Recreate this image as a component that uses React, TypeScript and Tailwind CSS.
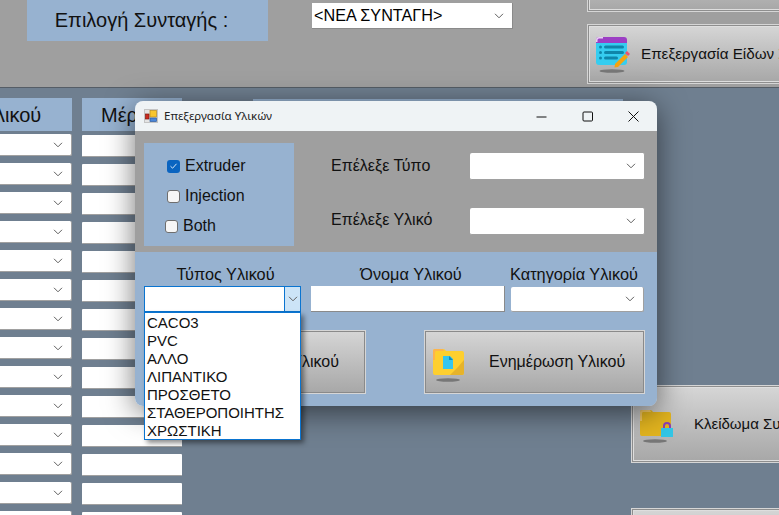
const font = { fontFamily: '"Liberation Sans", Arial, sans-serif' };

function Chevron() {
  return (
    <svg width="10" height="6" viewBox="0 0 10 6" fill="none" stroke="#606060" strokeWidth="1">
      <path d="M1 0.8 L5 4.8 L9 0.8" />
    </svg>
  );
}

function Combo({ className }: { className: string }) {
  return (
    <div className={`flex items-center justify-end bg-white border-b border-r border-[#a0a0a0] rounded-[2px] pr-[8px] shrink-0 ${className}`}>
      <Chevron />
    </div>
  );
}

function Check({ checked, label, className }: { checked?: boolean; label: string; className: string }) {
  return (
    <div className={`flex items-center gap-[5px] h-[20px] text-[16px] text-[#111] ${className}`}>
      {checked ? (
        <span className="w-[13px] h-[13px] rounded-[3px] bg-[#0a64c0] flex items-center justify-center">
          <svg width="9" height="8" viewBox="0 0 9 8" fill="none" stroke="#d8e8f8" strokeWidth="1">
            <path d="M1.5 4.2 L3.6 6.2 L7.5 1.8" />
          </svg>
        </span>
      ) : (
        <span className="w-[13px] h-[13px] rounded-[3px] bg-[#f6f6f6] border border-[#6e6e6e]" />
      )}
      <span>{label}</span>
    </div>
  );
}

function Shadow() {
  return <ellipse cx="16" cy="32" rx="12" ry="1.8" fill="#777" />;
}

function FolderDoc() {
  return (
    <svg width="34" height="36" viewBox="0 0 34 36">
      <path d="M1 3 Q1 1 3 1 H11 Q13 1 14 3 H30 Q32 3 32 5 V25 Q32 27 30 27 H3 Q1 27 1 25 Z" fill="#fecf2f" />
      <path d="M1 3 Q1 1 3 1 H11 L12 3 H4 Q3 3 3 5 V12 L1 12 Z" fill="#fdb44c" />
      <path d="M18 27 L26 19 L32 12 V25 Q32 27 30 27 Z" fill="#e6b32a" />
      <path d="M11 8 H18 L21 11 V21 H11 Z" fill="#35c6ee" />
      <path d="M17 8 L21 12 H17 Z" fill="#0f8cc0" />
      <Shadow />
    </svg>
  );
}

function FolderLock() {
  return (
    <svg width="36" height="36" viewBox="0 0 36 36">
      <path d="M1 3 Q1 1 3 1 H11 Q13 1 14 3 H30 Q32 3 32 5 V25 Q32 27 30 27 H3 Q1 27 1 25 Z" fill="#e2b41f" />
      <path d="M1 3 Q1 1 3 1 H11 L12 3 H4 Q3 3 3 5 V12 L1 12 Z" fill="#f2c765" />
      <path d="M25 19 V17 A3 3 0 0 1 31 17 V19" fill="none" stroke="#8b3fb5" strokeWidth="2" />
      <rect x="22" y="19" width="12" height="9" fill="#33c6e6" />
      <Shadow />
    </svg>
  );
}

function ListEdit() {
  return (
    <svg width="36" height="38" viewBox="0 0 36 38">
      <path d="M1 4 Q1 1 4 1 H29 Q32 1 32 4 V8 H1 Z" fill="#9c3fc4" />
      <path d="M1 7 H32 V26 Q32 29 29 29 H4 Q1 29 1 26 Z" fill="#35cdf0" />
      <path d="M1 4 Q1 1 4 1 H8 V2.5 H4 Q2.5 2.5 2.5 4 V6 H1 Z" fill="#e8d0f5" />
      <g fill="#0f86aa">
        <rect x="4" y="9.5" width="3" height="3" rx="1.5" />
        <rect x="4" y="15" width="3" height="3" rx="1.5" />
        <rect x="4" y="20.5" width="3" height="3" rx="1.5" />
        <rect x="9" y="9.5" width="20" height="3" rx="1.5" />
        <rect x="9" y="15" width="20" height="3" rx="1.5" />
        <rect x="9" y="20.5" width="14" height="3" rx="1.5" />
      </g>
      <path d="M20 28 L30 18 L33 21 L23 31 L19.5 31.5 Z" fill="#f5a30f" />
      <path d="M30 17 L32 15 L35 18 L33 20 Z" fill="#f0506e" />
      <ellipse cx="17" cy="35" rx="12.5" ry="1.8" fill="#777" />
    </svg>
  );
}

function AppIcon() {
  return (
    <svg width="14" height="14" viewBox="0 0 14 14">
      <rect x="0.5" y="0.5" width="13" height="13" fill="#e4e4e4" stroke="#c4c4c4" />
      <rect x="6" y="1.5" width="6.5" height="6.5" fill="#f7c62f" stroke="#b88a1a" strokeWidth="0.7" />
      <rect x="1.5" y="5" width="3.5" height="5" fill="#cc2a1e" stroke="#801a10" strokeWidth="0.7" />
      <rect x="6" y="9" width="6.5" height="3.5" fill="#4a86d8" stroke="#2a5aa0" strokeWidth="0.7" />
    </svg>
  );
}

function Button({ className, inner, icon, label, textClass }: { className: string; inner: string; icon?: React.ReactNode; label?: string; textClass?: string }) {
  return (
    <div className={`border border-[#d6d6d6] shrink-0 ${className}`}>
      <div className={`h-full bg-gradient-to-b from-[#d5d5d5] to-[#a8a8a8] flex items-center overflow-hidden whitespace-nowrap text-[#111] ${inner}`}>
        {icon}
        {label ? <span className={textClass}>{label}</span> : null}
      </div>
    </div>
  );
}

export default function App() {
  const rows = Array.from({ length: 14 });
  const mainOuter = "p-[1px] bg-[#8e8e8e]";
  const mainInner = "border border-[#dedede]";
  const dialogInner = "border border-[#8a8a8a]";
  return (
    <div style={font} className="relative w-[779px] h-[515px] overflow-hidden bg-[#6f7f90]">
      {/* Main form, top strip */}
      <div className="h-[88px] bg-[#9f9f9f] border-b border-[#555d66] flex items-start overflow-hidden">
        <div className="ml-[27px] w-[241px] h-[41px] bg-[#97b2d0] flex items-center justify-center pr-[12px] pb-[2px] text-[20px] text-[#111] shrink-0">
          Επιλογή Συνταγής :
        </div>
        <div className="ml-[44px] mt-[3px] w-[201px] h-[26px] bg-white border-b border-r border-[#8a8a8a] flex items-center justify-between pl-[2px] pr-[8px] text-[16.2px] text-black shrink-0">
          <span>&lt;ΝΕΑ ΣΥΝΤΑΓΗ&gt;</span>
          <Chevron />
        </div>
        <div className="ml-[74px] w-[250px] -mt-[48px] flex flex-col gap-[12px] shrink-0">
          <Button className={`h-[60px] ${mainOuter}`} inner={mainInner} />
          <Button
            className={`h-[60px] ${mainOuter}`}
            inner={mainInner}
            icon={<span className="ml-[5px] mt-[2px] flex"><ListEdit /></span>}
            label="Επεξεργασία Είδων Συνταγών"
            textClass="ml-[10px] text-[15.2px]"
          />
        </div>
      </div>

      {/* Main form, body */}
      <div className="flex items-start pt-[10px]">
        <div className="-ml-[100px] w-[172px] flex flex-col shrink-0">
          <div className="h-[33px] bg-[#97b2d0] text-[20px] text-[#111] flex items-center justify-center pr-[10px] mb-[3px]">Τύπος Υλικού</div>
          <div className="flex flex-col gap-[7px]">
            {rows.map((_, i) => (
              <Combo key={i} className="h-[22px] w-full" />
            ))}
          </div>
        </div>
        <div className="ml-[10px] w-[100px] flex flex-col shrink-0">
          <div className="h-[33px] bg-[#97b2d0] text-[20px] text-[#111] flex items-center pl-[19px] mb-[4px]">Μέρη</div>
          <div className="flex flex-col gap-[7px]">
            {rows.map((_, i) => (
              <div key={i} className="h-[22px] bg-white border-b border-[#a0a0a0] rounded-[1px]" />
            ))}
          </div>
        </div>
        <div className="ml-[71px] w-[370px] h-[33px] mt-[1px] bg-[#97b2d0] shrink-0" />
        <div className="ml-[8px] mt-[287px] w-[200px] flex flex-col gap-[45px] shrink-0">
          <Button
            className={`h-[78px] ${mainOuter}`}
            inner={mainInner}
            icon={<span className="ml-[5px] mt-[6px] flex"><FolderLock /></span>}
            label="Κλείδωμα Συνταγής"
            textClass="ml-[19px] text-[15px]"
          />
          <Button className={`h-[60px] ${mainOuter}`} inner={mainInner} />
        </div>
      </div>

      {/* Dialog window */}
      <div className="absolute left-[135px] top-[101px] w-[522px] h-[305px] rounded-[8px] shadow-[0_6px_30px_rgba(0,0,0,0.55)]">
        <div className="h-[30px] bg-[#eff3f5] rounded-t-[8px] flex items-center pl-[9px]">
          <AppIcon />
          <span style={{ fontFamily: '"Noto Sans", sans-serif' }} className="ml-[6px] text-[11.5px] text-[#222]">Επεξεργασία Υλικών</span>
          <div className="ml-auto flex items-center">
            <svg width="11" height="11" viewBox="0 0 11 11" className="mr-[35px]"><path d="M0.5 6 H10.5" stroke="#111" strokeWidth="1" /></svg>
            <svg width="11" height="11" viewBox="0 0 11 11" className="mr-[35px]"><rect x="1" y="1" width="9.5" height="9" rx="1" fill="none" stroke="#111" strokeWidth="1" /></svg>
            <svg width="11" height="11" viewBox="0 0 11 11" className="mr-[18px]"><path d="M0.5 0.5 L10.5 10.5 M10.5 0.5 L0.5 10.5" stroke="#111" strokeWidth="1" /></svg>
          </div>
        </div>
        <div className="h-[121px] bg-[#9f9f9f] flex pt-[12px] pl-[9px]">
          <div className="w-[150px] h-[103px] bg-[#97b2d0] flex flex-col pt-[13px] gap-[10px]">
            <Check checked label="Extruder" className="ml-[23px]" />
            <Check label="Injection" className="ml-[23px]" />
            <Check label="Both" className="ml-[21px]" />
          </div>
          <div className="ml-[37px] flex flex-col gap-[34px] pt-[11px] text-[16px] text-[#111] whitespace-nowrap w-[139px]">
            <span className="h-[20px]">Επέλεξε Τύπο</span>
            <span className="h-[20px]">Επέλεξε Υλικό</span>
          </div>
          <div className="flex flex-col gap-[28px] pt-[10px]">
            <Combo className="w-[175px] h-[27px]" />
            <Combo className="w-[175px] h-[27px]" />
          </div>
        </div>
        <div className="relative h-[154px] bg-[#97b2d0] rounded-b-[8px] pt-[12px] pl-[9px]">
          <div className="flex text-[16.3px] text-[#111] h-[20px] items-center whitespace-nowrap">
            <span className="w-[163px] text-center">Τύπος Υλικού</span>
            <span className="w-[208px] text-center">Όνομα Υλικού</span>
            <span className="w-[130px] -ml-[6px] text-center">Κατηγορία Υλικού</span>
          </div>
          <div className="flex mt-[2px] items-start">
            <div className="w-[157px] h-[26px] bg-white border border-[#0a74d0] flex justify-end shrink-0">
              <div className="w-[16px] h-full bg-[#cce4f7] border-l border-[#0a74d0] flex items-center justify-center">
                <Chevron />
              </div>
            </div>
            <div className="ml-[10px] w-[194px] h-[26px] bg-white border-b border-r border-[#8a8a8a] shrink-0" />
            <Combo className="ml-[6px] w-[133px] h-[25px] mt-[1px]" />
          </div>
          <div className="flex mt-[18px]">
            <div className="w-[222px] shrink-0">
              <Button
                className="w-full h-[64px]"
                inner={`${dialogInner} justify-end`}
                label="Προσθήκη Υλικού"
                textClass="mr-[25px] text-[16px]"
              />
            </div>
            <Button
              className="ml-[58px] w-[221px] h-[64px]"
              inner={dialogInner}
              icon={<span className="ml-[6px] mt-[8px] flex"><FolderDoc /></span>}
              label="Ενημέρωση Υλικού"
              textClass="ml-[23px] text-[16px]"
            />
          </div>
          {/* Opened combo list */}
          <div className="absolute left-[9px] top-[60px] w-[157px] h-[128px] bg-white border border-[#0a74d0] shadow-[3px_3px_5px_rgba(0,0,0,0.45)] pl-[2px] pt-[1px] text-[15px] leading-[18px] text-[#111]">
            {["CACO3", "PVC", "ΑΛΛΟ", "ΛΙΠΑΝΤΙΚΟ", "ΠΡΟΣΘΕΤΟ", "ΣΤΑΘΕΡΟΠΟΙΗΤΗΣ", "ΧΡΩΣΤΙΚΗ"].map((t) => (
              <div key={t}>{t}</div>
            ))}
          </div>
        </div>
      </div>
    </div>
  );
}
